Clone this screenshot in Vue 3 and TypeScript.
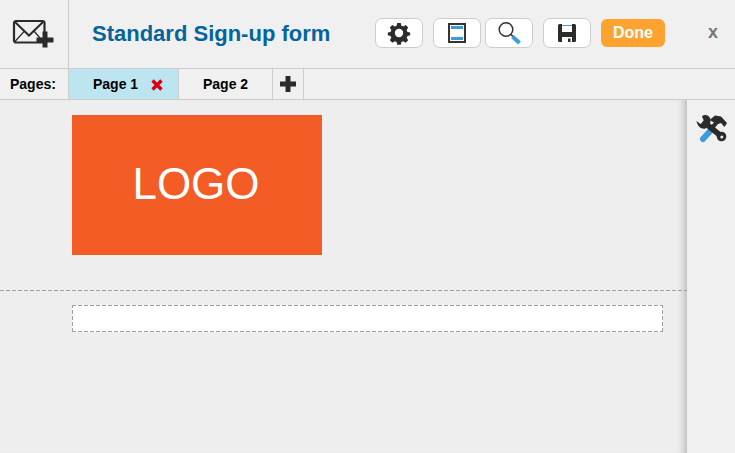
<template>
  <div class="app">
    <header class="topbar">
      <div class="brand">
        <svg width="42" height="30" viewBox="0 0 42 30">
          <rect x="2" y="2" width="30.5" height="21.500" rx="2" fill="none" stroke="#2b2b2b" stroke-width="2.200" />
          <path d="M3 3 L17 16.500 L31 3" fill="none" stroke="#2b2b2b" stroke-width="2" />
          <path d="M3 22.500 L12.500 12 M31 22.500 L22 12" fill="none" stroke="#2b2b2b" stroke-width="1.200" />
          <path d="M31 14h5v6h6v5h-6v5h-5v-5h-6v-5h6z" fill="#2b2b2b" transform="translate(-.5 -1.500)" />
        </svg>
      </div>
      <h1 class="title">Standard Sign-up form</h1>
      <div class="tools">
        <button class="tool gear">
          <svg width="24" height="24" viewBox="0 0 24 24">
            <path d="M10 1h4l.6 3 2.200.9 2.600-1.700 2.800 2.800-1.700 2.600.9 2.200 3 .6v3.200l-3 .6-.9 2.200 1.700 2.600-2.800 2.800-2.600-1.700-2.200.9-.6 3h-4l-.6-3-2.200-.9-2.600 1.700-2.800-2.800 1.700-2.600-.9-2.200-3-.6v-3.200l3-.6.9-2.200-1.700-2.600 2.800-2.800 2.600 1.700 2.200-.9z" fill="#2b2b2b" transform="translate(1.200 1.200) scale(.9)" />
            <circle cx="12" cy="12" r="4.200" fill="#fff" />
          </svg>
        </button>
        <button class="tool page">
          <svg width="18" height="20" viewBox="0 0 18 20">
            <rect x="1" y="1" width="16" height="18" fill="#fff" stroke="#333" stroke-width="2" />
            <rect x="3" y="3" width="12" height="3" fill="#3d9bd9" />
            <rect x="3" y="14" width="12" height="3" fill="#3d9bd9" />
          </svg>
        </button>
        <button class="tool search">
          <svg width="24" height="24" viewBox="0 0 24 24">
            <circle cx="9" cy="8.500" r="6.800" fill="none" stroke="#333" stroke-width="1.500" />
            <path d="M13.800 13.300 L16 15.500" stroke="#333" stroke-width="1.600" />
            <path d="M15.500 15.500 L22.500 22" stroke="#3d9bd9" stroke-width="4" />
          </svg>
        </button>
        <button class="tool save">
          <svg width="18" height="18" viewBox="0 0 18 18">
            <path d="M1.500 0h15a1.500 1.500 0 0 1 1.500 1.500v15a1.500 1.500 0 0 1-1.500 1.500h-15a1.500 1.500 0 0 1-1.500-1.500v-15a1.500 1.500 0 0 1 1.500-1.500z" fill="#2b2b2b" />
            <rect x="4" y="0" width="10" height="8" fill="#fff" />
            <rect x="4" y="1" width="10" height="1" fill="#3d9bd9" />
            <rect x="4" y="13" width="10" height="5" fill="#fff" />
            <rect x="10" y="14.500" width="2.500" height="3.500" fill="#2b2b2b" />
          </svg>
        </button>
        <button class="done">Done</button>
      </div>
      <span class="close">x</span>
    </header>

    <nav class="tabs">
      <span class="label">Pages:</span>
      <div class="tab active">
        Page 1
        <svg class="remove" width="12" height="12" viewBox="0 0 12 12">
          <path d="M1.500 1.500 L10.500 10.500 M10.500 1.500 L1.500 10.500" stroke="#d90012" stroke-width="3.400" />
        </svg>
      </div>
      <div class="tab second">Page 2</div>
      <div class="add">
        <svg width="16" height="16" viewBox="0 0 16 16">
          <path d="M5.500 0h5v5.500h5.500v5h-5.500v5.500h-5v-5.500h-5.500v-5h5.500z" fill="#2b2b2b" />
        </svg>
      </div>
    </nav>

    <div class="body">
      <main class="canvas">
        <section class="logo-row">
          <div class="logo">LOGO</div>
        </section>
        <section class="field-row">
          <div class="field"></div>
        </section>
      </main>
      <aside class="side">
        <svg width="32" height="30" viewBox="0 0 32 30">
          <path d="M8 26 L17 16" stroke="#3d9bd9" stroke-width="6" stroke-linecap="round" />
          <path d="M10 10 L26 23" stroke="#2b2b2b" stroke-width="5.500" stroke-linecap="round" />
          <circle cx="26.500" cy="23.500" r="4.800" fill="#2b2b2b" />
          <circle cx="26.800" cy="24" r="1.500" fill="#f0f0f0" />
          <path d="M1.500 8 L5.500 11 L9 8 L7 3.500 C9.500 1 13.500 2 15 5 C16 8 15.500 10 14 12 L10.500 15.500 C7 16.500 2.500 14 1.500 8z" fill="#2b2b2b" />
          <path d="M14.500 7 L20 2.500 L26 3.500 L32 10 L29.500 14 L26 10 L23 11 L17 18 L14 14.500 L19 9.500z" fill="#2b2b2b" />
        </svg>
      </aside>
    </div>
  </div>
</template>

<script setup lang="ts"></script>

<style>
html, body { margin: 0; background: #eeeeee; }
</style>

<style scoped>
.app {
  width: 735px;
  height: 453px;
  overflow: hidden;
  display: flex;
  flex-direction: column;
  font-family: "Liberation Sans", Arial, sans-serif;
  background: #eeeeee;
}
.topbar {
  height: 68px;
  display: flex;
  align-items: center;
  background: #f0f0f0;
  border-bottom: 1px solid #cccccc;
  flex: none;
}
.brand {
  width: 56px;
  height: 100%;
  border-right: 1px solid #cccccc;
  display: flex;
  align-items: center;
  padding-left: 12px;
  margin-right: 23px;
}
.brand svg { margin-top: -1px; }
.title {
  margin: 0;
  width: 283px;
  font-size: 22px;
  font-weight: 700;
  color: #05649c;
  white-space: nowrap;
}
.tools {
  display: flex;
  align-items: center;
  margin-top: -2px;
}
.tool {
  width: 48px;
  height: 30px;
  padding: 0;
  box-sizing: border-box;
  background: #fff;
  border: 1px solid #cccccc;
  border-radius: 7px;
  display: flex;
  align-items: center;
  justify-content: center;
}
.gear { margin-right: 10px; }
.page { margin-right: 4px; }
.search { margin-right: 10px; }
.save { margin-right: 10px; }
.done {
  width: 64px;
  height: 28px;
  padding: 0;
  border: 0;
  border-radius: 6px;
  background: #ffa330;
  color: #fff;
  font: 700 16px "Liberation Sans", Arial, sans-serif;
}
.close {
  margin-left: 43px;
  font-size: 18px;
  font-weight: 700;
  color: #777777;
  margin-top: -3px;
}
.tabs {
  height: 30px;
  flex: none;
  display: flex;
  align-items: stretch;
  background: #f0f0f0;
  border-bottom: 1px solid #cccccc;
  font-size: 14px;
  font-weight: 700;
  color: #000;
}
.label {
  width: 69px;
  padding-left: 10px;
  box-sizing: border-box;
  line-height: 30px;
  border-right: 1px solid #cccccc;
}
.tab {
  border-right: 1px solid #cccccc;
  display: flex;
  align-items: center;
  padding-left: 24px;
}
.tab.active {
  background: #bde5f1;
  width: 85px;
}
.tab.second { width: 69px; }
.remove { margin-left: 13px; margin-top: 1px; }
.add {
  width: 30px;
  border-right: 1px solid #cccccc;
  display: flex;
  align-items: center;
  justify-content: center;
}
.body {
  flex: 1;
  display: flex;
  min-height: 0;
}
.canvas {
  flex: 1;
  background: #eeeeee;
  padding-top: 15px;
  box-shadow: inset -9px 0 8px -7px rgba(0, 0, 0, .26);
}
.logo-row {
  height: 176px;
  box-sizing: border-box;
  padding-left: 72px;
  background: repeating-linear-gradient(90deg, #a0a0a0 0 4px, transparent 4px 6px) left bottom / 100% 1px no-repeat;
}
.logo {
  width: 250px;
  height: 140px;
  padding: 0 2px 3px 0;
  box-sizing: border-box;
  background: #f35c24;
  color: #fff;
  font-size: 44px;
  display: flex;
  align-items: center;
  justify-content: center;
}
.field-row {
  padding: 14px 24px 0 72px;
}
.field {
  height: 27px;
  box-sizing: border-box;
  background:
    repeating-linear-gradient(90deg, #a0a0a0 0 4px, #fff 4px 6px) left top / 100% 1px no-repeat,
    repeating-linear-gradient(90deg, #a0a0a0 0 4px, #fff 4px 6px) left bottom / 100% 1px no-repeat,
    repeating-linear-gradient(0deg, #a0a0a0 0 4px, #fff 4px 6px) left top / 1px 100% no-repeat,
    repeating-linear-gradient(0deg, #a0a0a0 0 4px, #fff 4px 6px) right top / 1px 100% no-repeat,
    #fff;
}
.side {
  width: 48px;
  flex: none;
  background: #f0f0f0;
  display: flex;
  justify-content: center;
  align-items: flex-start;
  padding-top: 13px;
}
</style>
